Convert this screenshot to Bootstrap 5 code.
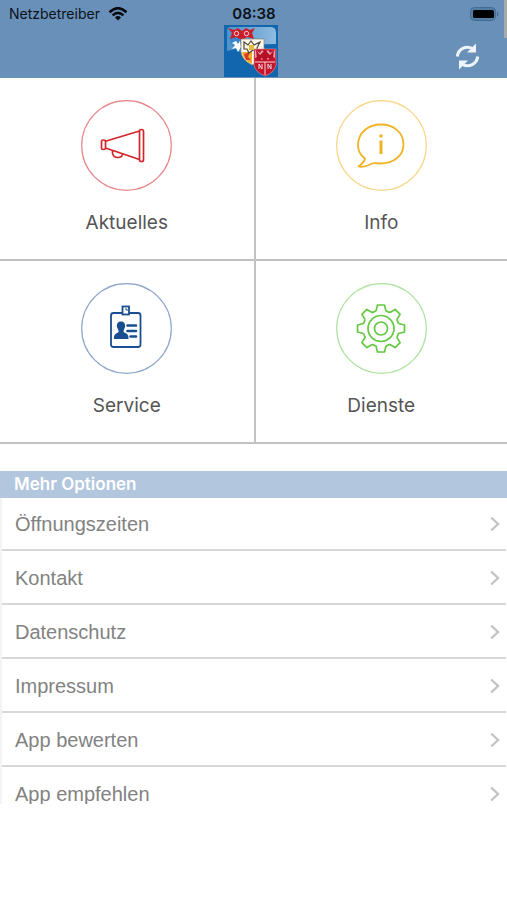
<!DOCTYPE html>
<html lang="de">
<head>
<meta charset="utf-8">
<meta name="viewport" content="width=device-width, initial-scale=1">
<title>Netzbetreiber</title>
<link href="https://cdn.jsdelivr.net/npm/bootstrap@5.3.0/dist/css/bootstrap.min.css" rel="stylesheet">
<style>
body{font-family:Inter,"Liberation Sans",sans-serif;background:#fff}
svg{display:block}
.topbar{background:#6990b9;color:#0c1219}
.status{height:25px;font-size:14px;line-height:20px;padding:2px 8px 0 9px}
.status>*{flex:1 1 0}
.clock{font-size:15px;font-weight:600}
.scroll-thumb{width:3px;height:38px;background:#a9a9ab}
.brandbar{padding:0 6px 1px 0}
.brandbar>*{flex:1 1 0}
.reload{background:none;border:0;padding:10px 20px 0 0}
.tiles>*{border-bottom:2px solid #c2c2c2}
.tiles>:nth-child(even){border-left:2px solid #c2c2c2}
.tile{color:#555;font-size:19px;line-height:24px;padding:22px 0 24px;gap:20px}
.section-title{margin-top:27px;background:#b2c6de;color:#fff;font-size:17px;line-height:27px;font-weight:600;padding:0 14px;margin-bottom:0}
.options{height:306px;font-family:"Liberation Sans",Arial,sans-serif;border-left:2px solid #f3f3f3;margin-right:1px}
.option{color:#828282;font-size:20px;line-height:24px;padding:15px 6px 13px 13px;border-bottom:2px solid #d8d8d8}
.option:first-child{padding-top:14px}
</style>
</head>
<body>
<header class="topbar position-relative">
  <div class="status d-flex align-items-center">
    <span class="d-flex align-items-center gap-2">Netzbetreiber
      <svg width="20" height="14" viewBox="0 0 20 14" fill="none" stroke="#080c10" stroke-width="2.6"><path d="M1.5 5.2Q10-2.8 18.5 5.2M4.6 8.4Q10 3.2 15.4 8.4"/><path d="M7 10.4Q10 7.7 13 10.4L10 13.4Z" fill="#080c10" stroke="none"/></svg>
    </span>
    <span class="clock text-center">08:38</span>
    <span class="d-flex justify-content-end">
      <svg width="30" height="14" viewBox="0 0 30 14"><rect x="1.5" y=".5" width="25" height="13" rx="4" fill="#527fa8" stroke="#436c91"/><path d="M28 4Q31 7 28 10Z" fill="#436c91"/><rect x="4" y="3" width="21" height="8" rx="1.5" fill="#000"/></svg>
    </span>
  </div>
  <div class="brandbar d-flex align-items-center">
    <span></span>
    <span class="d-flex justify-content-center">
      <svg width="54" height="52" viewBox="0 0 54 52" role="img" aria-label="Wappen">
        <defs><linearGradient id="gloss" x2="1" y2="0"><stop stop-color="#4d93ca"/><stop offset="1" stop-color="#8fbbe0"/></linearGradient></defs>
        <path fill="#1266ae" d="M0 0H54V52H0Z"/>
        <path fill="url(#gloss)" d="M6 2H47Q52 2 52 8V19Q28 19 3 26V6Q3 2 6 2Z"/>
        <path fill="#3a86ca" d="M6 12H18V28Q7 24 6 15Z"/>
        <path d="M8 18L12 16L14 19L16 16L17 22L14 27L12 23L8 24L11 20Z" fill="#fff"/>
        <path fill="#c91d2b" d="M4 3L10 5L14 3L18 6L22 3L26 5L31 3L28 8L30 14L23 12L18 15L12 12L6 14L8 8Z"/>
        <g fill="none" stroke="#f8d4d8" stroke-width="1"><circle cx="12.500" cy="8.500" r="2.200"/><circle cx="22.500" cy="8.500" r="2.200"/></g>
        <path fill="#faf7ed" stroke="#8c806d" stroke-width=".7" d="M17 14H40V27Q38 36 28 40Q18 35 17 27Z"/>
        <path fill="#f3ab23" d="M18 27H28V39Q19 35 18 27Z"/>
        <path fill="#d63b2c" d="M20 29L26 27L24 32L27 35L22 35Z"/>
        <path fill="none" stroke="#514936" stroke-width="1.200" d="M20 17L24 20L27 16L30 20L36 17L33 23L35 28L29 25L25 28L23 24L20 24Z"/>
        <path fill="#e5bd35" d="M25 20H30V25H25Z"/>
        <path fill="#c4142b" stroke="#e59aa3" stroke-width=".6" d="M30 24H52V40Q50 48 41 51Q31 47 30 40Z"/>
        <path fill="#e9a5b0" d="M31 25L36 28L38 25L41 28L44 25L46 28L51 25V33L47 31L44 35L41 31L38 35L35 31L31 33Z"/>
        <path fill="#b61028" d="M32 25L36 30L41 25L46 30L50 25L49 34L43 33L41 37L38 33L33 35Z"/>
        <path fill="none" stroke="#f4d5da" stroke-width="1" d="M41 37V50M35 44V39L38 44V39M44 44V39L47 44V39M31 37H51"/>
      </svg>
    </span>
    <span class="d-flex justify-content-end">
      <button class="reload" type="button" aria-label="Aktualisieren">
        <svg width="27" height="27" viewBox="0 0 27 27" fill="#eef4fa"><g id="turn"><path d="M3.300 13.500A10.300 10.300 0 0 1 18.500 5.500" fill="none" stroke="#eef4fa" stroke-width="3"/><path d="M22 .5V9.500H13Z"/></g><use href="#turn" transform="rotate(180 13.500 13.500)"/></svg>
      </button>
    </span>
  </div>
  <div class="scroll-thumb position-absolute top-0 end-0"></div>
</header>
<main>
  <nav class="tiles row row-cols-2 g-0">
    <a href="#" class="tile col d-flex flex-column align-items-center text-decoration-none">
      <svg width="91" height="91" viewBox="0 0 91 91" fill="none" stroke="#d3262a" stroke-width="1.700" stroke-linejoin="round"><circle cx="45.500" cy="45.500" r="44.800" stroke="#e88589" stroke-width="1.200"/><rect x="20.500" y="40" width="4" height="9.500" rx="1.500"/><path d="M24.500 41.300L58.500 31M24.500 48L58.500 59.500M31.500 50.500V53Q32 57.500 37 57.500Q41 57.500 41.500 54"/><rect x="58.500" y="29.500" width="4" height="32" rx="1.800"/></svg>
      Aktuelles
    </a>
    <a href="#" class="tile col d-flex flex-column align-items-center text-decoration-none">
      <svg width="91" height="91" viewBox="0 0 91 91" fill="none" stroke="#f0b323" stroke-width="1.800" stroke-linejoin="round" stroke-linecap="round"><circle cx="45.500" cy="45.500" r="44.800" stroke="#f8d688" stroke-width="1.200"/><path d="M29 58.500C24 55 22 50 22 45C22 33 32 24.500 45 24.500S67.500 33 67.500 44.500S57 63.500 45 63.500C41 63.500 39 62.500 36 63.500C31 66 26 67.500 22.500 66.500C26 64 28.500 61.500 29 58.500Z"/><path stroke-width="3" stroke-linecap="butt" d="M45 40.500V54"/><circle cx="45" cy="36" r="1.800" fill="#f0b323" stroke="none"/></svg>
      Info
    </a>
    <a href="#" class="tile col d-flex flex-column align-items-center text-decoration-none">
      <svg width="91" height="91" viewBox="0 0 91 91" fill="none" stroke="#194f91" stroke-width="1.800"><circle cx="45.500" cy="45.500" r="44.800" stroke="#8da6ca" stroke-width="1.200"/><rect x="30" y="30" width="29.500" height="34" rx="2.500"/><rect x="41.500" y="23.500" width="6.500" height="8" fill="#fff"/><path stroke-width="1" d="M44 26H46V28"/><path fill="#194f91" stroke="none" d="M40 38.500C43.500 38.500 44.500 41 44 44C43.500 46 42.500 47 42.500 48.500C43.500 50.500 47.500 50 47.500 54.500V56H33V54.500C33 50 37 50.500 37.700 48.500C37.700 47 36.500 46 36 44C35.500 41 36.500 38.500 40 38.500Z"/><path stroke-width="2.600" stroke-linecap="round" d="M46.500 42.500H55M46.500 48H55M49.500 53.500H55"/></svg>
      Service
    </a>
    <a href="#" class="tile col d-flex flex-column align-items-center text-decoration-none">
      <svg width="91" height="91" viewBox="0 0 91 91" fill="none" stroke="#62c941" stroke-width="1.700" stroke-linejoin="round"><circle cx="45.500" cy="45.500" r="44.800" stroke="#b0e3a1" stroke-width="1.200"/><g transform="translate(45 45.500)"><path id="tooth" d="M-5-17.500L-3.500-23.500H3.500L5-17.500L8.840-15.900"/><use href="#tooth" transform="rotate(45)"/><use href="#tooth" transform="rotate(90)"/><use href="#tooth" transform="rotate(135)"/><use href="#tooth" transform="rotate(180)"/><use href="#tooth" transform="rotate(225)"/><use href="#tooth" transform="rotate(270)"/><use href="#tooth" transform="rotate(315)"/><circle r="13"/><circle r="6.500"/></g></svg>
      Dienste
    </a>
  </nav>
  <h2 class="section-title">Mehr Optionen</h2>
  <div class="options overflow-hidden">
    <a href="#" class="option d-flex justify-content-between align-items-center text-decoration-none">Öffnungszeiten<svg width="10" height="16" viewBox="0 0 10 16" fill="none" stroke="#c4c4c4" stroke-width="2.400"><path id="chev" d="M1.200 1.500L8 8L1.200 14.500"/></svg></a>
    <a href="#" class="option d-flex justify-content-between align-items-center text-decoration-none">Kontakt<svg width="10" height="16" fill="none" stroke="#c4c4c4" stroke-width="2.400"><use href="#chev"/></svg></a>
    <a href="#" class="option d-flex justify-content-between align-items-center text-decoration-none">Datenschutz<svg width="10" height="16" fill="none" stroke="#c4c4c4" stroke-width="2.400"><use href="#chev"/></svg></a>
    <a href="#" class="option d-flex justify-content-between align-items-center text-decoration-none">Impressum<svg width="10" height="16" fill="none" stroke="#c4c4c4" stroke-width="2.400"><use href="#chev"/></svg></a>
    <a href="#" class="option d-flex justify-content-between align-items-center text-decoration-none">App bewerten<svg width="10" height="16" fill="none" stroke="#c4c4c4" stroke-width="2.400"><use href="#chev"/></svg></a>
    <a href="#" class="option d-flex justify-content-between align-items-center text-decoration-none">App empfehlen<svg width="10" height="16" fill="none" stroke="#c4c4c4" stroke-width="2.400"><use href="#chev"/></svg></a>
  </div>
</main>
<script src="https://cdn.jsdelivr.net/npm/bootstrap@5.3.0/dist/js/bootstrap.bundle.min.js"></script>
</body>
</html>
